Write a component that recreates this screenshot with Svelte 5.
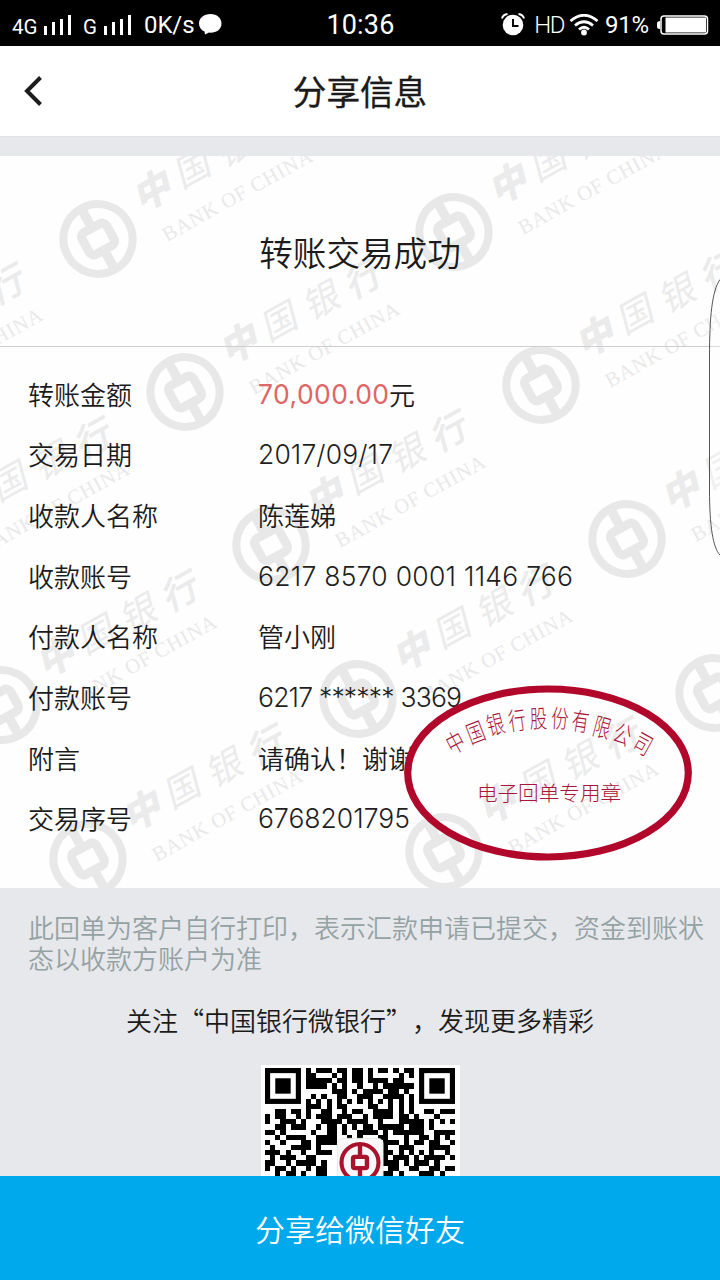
<script>
  const rows = [
    ['交易日期', '2017/09/17', 135],
    ['收款人名称', '陈莲娣', 0],
    ['收款账号', '6217 8570 0001 1146 766', 315],
    ['付款人名称', '管小刚', 0],
    ['付款账号', '6217 ****** 3369', 204],
    ['附言', '请确认！谢谢', 0],
    ['交易序号', '6768201795', 152]
  ];

  const marks = [
    [98, 83], [454, 76], [-259, 89], [-172, 242], [185, 236], [541, 229], [-85, 396],
    [271, 389], [627, 383], [2, 549], [358, 543], [714, 537],
    [88, 703], [444, 696], [-268, 709]
  ];

  const seal = [
    ['中', 455, 742, -28], ['国', 475, 732, -21], ['银', 495, 724, -14], ['行', 516.5, 720, -8],
    ['股', 538, 718, -2], ['份', 559.5, 718, 3], ['有', 580, 721, 8], ['限', 601.5, 727, 15],
    ['公', 622, 734, 22], ['司', 642.5, 743.5, 29]
  ];

  const qr = [
    '........#.###.##.##.#.##.#.##........',
    '........##...#.#.##.#.....#.#........',
    '........#####.##.##.####.##..........',
    '........####.#.#..#..#.######........',
    '.............###.#.####.##.#.........',
    '.........#.#..##..###..####.#........',
    '........#.#.#.#.#.#.#.#.#.#.#........',
    '........###.#.##....##..#.#.#........',
    '..##.##.#..##..#.##..####.#.#..##.###',
    '#.##..#.#.###.###..#.####.##.#...#...',
    '#..###.#...####.####..#...#####.#.#.#',
    '..##.###..#.##.#.#.##.#####.###.#....',
    '##.#.....#..##.#..####.#.######..####',
    '..#.####..####..#.#...##...#..##.#.#.',
    '#..#...##.####.........###.#.##.##..#',
    '.#...####.#............#..###...####.',
    '###.#..#..###..........##.#.#.#.#..#.',
    '.#.###..##.............#.###.#.####.#',
    '##..#.####.#...........###.#.###.#...',
    '#.##.#..#.##............##..##..##.##',
    '..#.##.#..##...........##.#...###.#..',
    '##.##.##.###...........#.###.##..###.'
  ];
  const runs = [];
  qr.forEach((line, y) => {
    for (const m of line.matchAll(/#+/g)) runs.push([m.index, y, m[0].length]);
  });
</script>

<div class="screen">
  <div class="status">
    <div class="group left">
      <span class="net">4G</span>
      <svg width="28" height="20" viewBox="0 0 28 20"><path d="M0 11h3v9H0zM8 7h3v13H8zM16 4h3v16h-3zM24 0h3v20h-3z" fill="#fff" /></svg>
      <span class="net g">G</span>
      <svg width="28" height="20" viewBox="0 0 28 20"><path d="M0 11h3v9H0zM8 7h3v13H8zM16 4h3v16h-3zM24 0h3v20h-3z" fill="#fff" /></svg>
      <span class="speed">0K/s</span>
      <svg class="bubble" width="23" height="21" viewBox="0 0 23 21"><path d="M11.500 0C5 0 0 4 0 9.500c0 3.600 2 6.500 5.500 8.100L6 20.500l4-2 1.500.2C18 18.700 22.500 15 22.500 9.500S18 0 11.500 0z" fill="#fff" /></svg>
    </div>
    <span class="clock">10:36</span>
    <div class="group right">
      <svg width="24" height="23" viewBox="0 0 24 23">
        <circle cx="12" cy="12" r="10.300" fill="#fff" />
        <path d="M1 5.500Q2 1.500 6.500 1M23 5.500Q22 1.500 17.500 1" fill="none" stroke="#fff" stroke-width="2" />
        <path d="M12 6v7h5.500" fill="none" stroke="#000" stroke-width="1.900" />
      </svg>
      <span class="hd">HD</span>
      <svg class="wifi" width="30" height="22" viewBox="0 0 30 22">
        <path d="M1.500 7Q15-4.500 28.500 7M6 11.500Q15 4 24 11.500M10 15.500Q15 11 20 15.500" fill="none" stroke="#fff" stroke-width="2.800" />
        <circle cx="15" cy="18.500" r="2.900" fill="#fff" />
      </svg>
      <span class="pct">91%</span>
      <svg width="52" height="20" viewBox="0 0 52 20">
        <path d="M3 6Q0 6 0 8.500v3Q0 14 3 14z" fill="#fff" />
        <rect x="4" y="1" width="46.500" height="18" rx="3" fill="none" stroke="#fff" stroke-width="1.500" />
        <rect x="8.500" y="2.500" width="40.500" height="15" fill="#fff" />
      </svg>
    </div>
  </div>

  <header>
    <svg class="back" width="19" height="30" viewBox="0 0 19 30"><path d="M16.500 1.500 3 15l13.500 13.500" fill="none" stroke="#1c1c1c" stroke-width="4" /></svg>
    <h1>分享信息</h1>
  </header>

  <main>
    <section class="receipt">
      <svg class="watermark" width="720" height="732" viewBox="0 0 720 732" aria-hidden="true">
        {#each marks as [x, y]}
          <g transform="translate({x} {y}) rotate(-29)">
            <g fill="none" stroke="#e8e8e8">
              <ellipse rx="34.500" ry="35" stroke-width="8" />
              <rect x="-14" y="-12.500" width="28" height="25" rx="5" stroke-width="9" />
              <path d="M0-34v20M0 14v20" stroke-width="9.500" />
            </g>
            <g fill="#ebebeb" class="brush">
              <text x="52" y="-3" stroke="#ebebeb" stroke-width="3">中</text>
              <text x="97" y="-3">国</text>
              <text x="144" y="-1">银</text>
              <text x="191" y="0" stroke="#ebebeb" stroke-width="1">行</text>
            </g>
            <text class="latin" x="59" y="36" textLength="168" fill="#e9e9e9">BANK OF CHINA</text>
          </g>
        {/each}
      </svg>

      <h2>转账交易成功</h2>
      <dl>
        <dt>转账金额</dt>
        <dd class="amount"><svg width="131" height="30"><text x="0" y="25" textLength="131">70,000.00</text></svg><span>元</span></dd>
        {#each rows as [label, value, w]}
          <dt>{label}</dt>
          <dd>
            {#if w}
              <svg width={w} height="30"><text x="0" y="25" textLength={w}>{value}</text></svg>
            {:else}{value}{/if}
          </dd>
        {/each}
      </dl>

      <svg class="seal" width="290" height="178" viewBox="402.500 683.500 290 178">
        <ellipse cx="547.500" cy="772.500" rx="140.300" ry="84" fill="none" stroke="#b0072a" stroke-width="7.200" />
        {#each seal as [ch, x, y, r]}
          <text transform="translate({x} {y}) rotate({r}) scale(.76 1.080)" y="8.500" font-size="23">{ch}</text>
        {/each}
        <text x="548.500" y="800" font-size="20.600">电子回单专用章</text>
      </svg>
    </section>

    <p class="note">此回单为客户自行打印，表示汇款申请已提交，资金到账状态以收款方账户为准</p>
    <p class="follow">关注“中国银行微银行”，发现更多精彩</p>
    <div class="qr">
      <svg width="190" height="190" viewBox="0 0 37 37">
        {#each runs as [x, y, n]}<rect {x} {y} width={n} height="1" shape-rendering="crispEdges" />{/each}
        {#each [0, 30] as x}
          <rect x={x + 0.5} y=".5" width="6" height="6" fill="none" stroke="#000" />
          <rect x={x + 2} y="2" width="3" height="3" />
        {/each}
        <rect x="14.100" y="13.700" width="8.900" height="9" rx="1" fill="#f8f8f8" stroke="#dde5dc" stroke-width=".15" />
        <g fill="none" stroke="#a9132d">
          <circle cx="18.500" cy="18.400" r="3.600" stroke-width=".8" />
          <rect x="17.150" y="17.300" width="2.700" height="2.200" rx=".3" stroke-width=".85" />
          <path d="M18.500 14.800v2.400M18.500 19.500v2.400" stroke-width=".85" />
        </g>
      </svg>
    </div>
  </main>

  <button>分享给微信好友</button>

  <svg class="edge" width="12" height="280" viewBox="0 0 12 280"><path d="M12 .5C4 12 1.500 38 1.500 78V211C1.500 247 5 269 12 276" fill="#fff" fill-opacity=".25" stroke="#555" /></svg>
</div>

<style>
  :global(body) { margin: 0; }
  .screen {
    position: relative;
    display: flex;
    flex-direction: column;
    width: 720px;
    height: 1280px;
    overflow: hidden;
    background: #e7e8ec;
    color: #1b1b1b;
    font-family: "Noto Sans CJK SC", "Noto Sans", sans-serif;
    text-spacing-trim: space-all;
  }
  .status {
    display: grid;
    grid-template-columns: 1fr auto 1fr;
    align-items: center;
    height: 46px;
    flex: none;
    box-sizing: border-box;
    padding: 3px 11px 0 12px;
    background: #000;
    color: #fff;
    font-family: Roboto, sans-serif;
    font-size: 24px;
  }
  .group { display: flex; align-items: center; }
  .right { justify-content: flex-end; }
  .net { width: 32px; font-size: 20.500px; padding-top: 4px; box-sizing: border-box; }
  .net.g { width: 21px; margin-left: 11px; }
  .speed { width: 49px; margin-left: 12px; letter-spacing: -.1px; white-space: nowrap; }
  .bubble { margin-left: 6px; }
  .clock { font-size: 27px; letter-spacing: .2px; }
  .hd { margin-left: 9px; font-weight: 300; letter-spacing: -1.500px; }
  .wifi { margin-left: 5px; }
  .pct { margin: 0 6px 0 6px; }
  .right .pct { width: 46px; white-space: nowrap; letter-spacing: -.2px; }
  header {
    display: grid;
    grid-template-columns: 100px 1fr 100px;
    align-items: center;
    height: 90px;
    flex: none;
    background: #fff;
  }
  .back { margin-left: 24px; }
  h1 { margin: 0; text-align: center; font-size: 33.600px; line-height: 44px; font-weight: 400; -webkit-text-stroke: .35px #1b1b1b; }
  main { flex: 1; min-height: 0; overflow: hidden; padding-top: 19px; border-top: 1px solid #e2e2e3; box-sizing: border-box; }
  .receipt { position: relative; height: 732px; background: #fefefe; }
  .watermark { position: absolute; inset: 0; overflow: hidden; }
  .brush { font-size: 36px; font-style: italic; font-weight: 400; }
  .latin { font: 20.500px "Liberation Serif", serif; }
  h2 {
    position: relative;
    margin: 0;
    height: 190px;
    border-bottom: 1px solid #cfcfcf;
    text-align: center;
    font-size: 33.600px;
    line-height: 191px;
    font-weight: 350;
  }
  dl {
    position: relative;
    display: grid;
    grid-template-columns: 230px 1fr;
    grid-auto-rows: 60.650px;
    align-items: center;
    margin: 0;
    padding: 16.500px 0 0 28px;
    font-size: 26px;
    line-height: 38px;
    font-weight: 350;
  }
  dd { display: flex; align-items: center; margin: 0; }
  dd svg { overflow: visible; }
  dd text { font-family: Inter, sans-serif; font-weight: 300; font-size: 26.500px; fill: #1f1f1f; white-space: pre; }
  .amount text { fill: #df6666; font-weight: 400; }
  .seal { position: absolute; left: 402.500px; top: 527.500px; }
  .seal text { fill: #a9163a; text-anchor: middle; font-weight: 300; }
  .note { margin: 23px 0 0 28px; width: 680px; font-size: 26px; line-height: 31px; font-weight: 350; color: #95a2a3; }
  .follow { margin: 28px 0 0; text-align: center; font-size: 26px; line-height: 38px; font-weight: 350; }
  .qr { width: 199px; height: 199px; margin: 26px 0 0 261px; box-sizing: border-box; padding: 3px 4px; background: #fff; }
  .qr svg { display: block; }
  button {
    height: 104px;
    flex: none;
    padding: 0 0 1px;
    border: 0;
    background: #00a9ec;
    color: #fff;
    font: 350 30px "Noto Sans CJK SC", sans-serif;
  }
  .edge { position: absolute; right: 0; top: 279px; }
</style>
